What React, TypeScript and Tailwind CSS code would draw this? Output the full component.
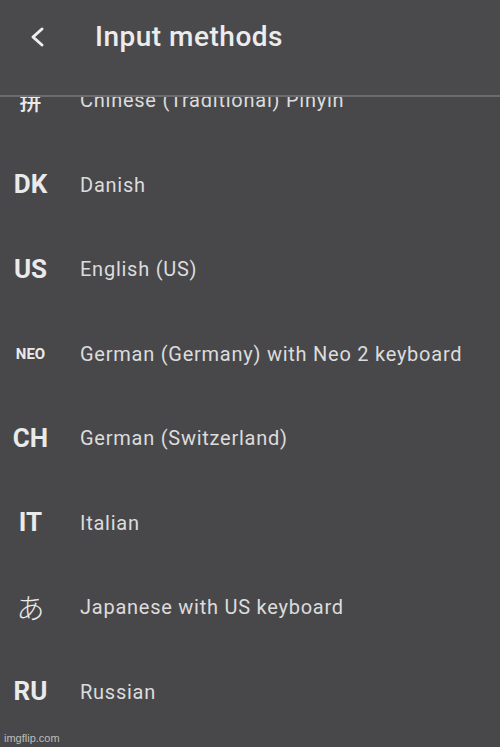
import React from 'react';

type Method = { code: string; label: string; kind: 'code' | 'small' | 'han' | 'kana' };

const methods: Method[] = [
  { code: '拼', label: 'Chinese (Traditional) Pinyin', kind: 'han' },
  { code: 'DK', label: 'Danish', kind: 'code' },
  { code: 'US', label: 'English (US)', kind: 'code' },
  { code: 'NEO', label: 'German (Germany) with Neo 2 keyboard', kind: 'small' },
  { code: 'CH', label: 'German (Switzerland)', kind: 'code' },
  { code: 'IT', label: 'Italian', kind: 'code' },
  { code: 'あ', label: 'Japanese with US keyboard', kind: 'kana' },
  { code: 'RU', label: 'Russian', kind: 'code' },
];

const codeClass = {
  code: 'text-[26px] font-bold',
  small: 'text-[15px] font-bold',
  han: "text-[22px] font-medium font-['Noto_Sans_CJK_SC',sans-serif]",
  kana: "text-[28px] font-light font-['Noto_Sans_CJK_JP',sans-serif]",
};

export default function App() {
  return (
    <div className="relative flex h-[747px] w-[500px] flex-col overflow-hidden bg-[#48484b] font-['Roboto',sans-serif] text-[#dedede]">
      {/* Header */}
      <div className="relative z-10 flex h-[95px] shrink-0 items-start bg-[#4a4a4d] shadow-[0_1px_0_1px_#6c6c6e]">
        <div className="flex h-[74px] items-center pl-[28px]">
          <svg width="20" height="22" viewBox="0 0 20 22" fill="none">
            <path d="M14 3 L5 11 L14 19" stroke="#efefef" strokeWidth="3" strokeLinecap="round" strokeLinejoin="round" />
          </svg>
          <h1 className="ml-[47px] text-[28px] font-medium tracking-[0.5px] text-[#ececec]">Input methods</h1>
        </div>
      </div>

      {/* List */}
      <div className="-mt-[37px] flex flex-col">
        {methods.map((m) => (
          <div key={m.label} className="flex h-[84.5px] items-center">
            <div className={`flex w-[60px] justify-center pl-[1px] text-[#eaeaea] ${codeClass[m.kind]}`}>
              {m.code}
            </div>
            <div className="ml-[20px] text-[20px] tracking-[0.75px] text-[#dcdcdc]">{m.label}</div>
          </div>
        ))}
      </div>

      <div className="absolute bottom-[1px] left-[4px] font-['Liberation_Sans',sans-serif] text-[11px] text-[#bdbdbd]">
        imgflip.com
      </div>
    </div>
  );
}
